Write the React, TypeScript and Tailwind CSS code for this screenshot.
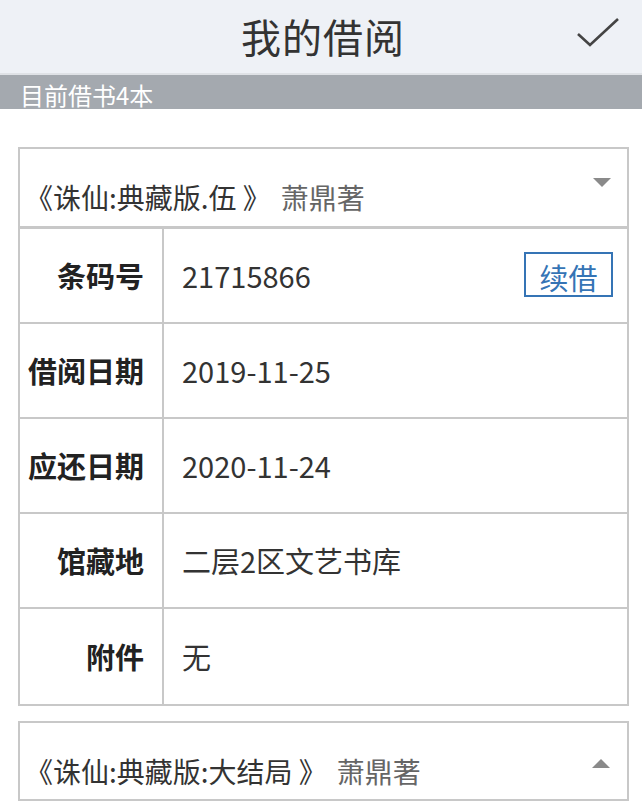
import React from "react";

const font = { fontFamily: '"Noto Sans CJK SC", "Noto Sans", sans-serif' };

const rows = [
  { label: "条码号", value: "21715866", renew: true },
  { label: "借阅日期", value: "2019-11-25" },
  { label: "应还日期", value: "2020-11-24" },
  { label: "馆藏地", value: "二层2区文艺书库" },
  { label: "附件", value: "无" },
];

function Triangle({ up }: { up?: boolean }) {
  return (
    <svg width="18" height="9" viewBox="0 0 18 9" className="text-[#8a8a8a]">
      <path d={up ? "M9 0 L18 9 L0 9 Z" : "M0 0 L18 0 L9 9 Z"} fill="currentColor" />
    </svg>
  );
}

export default function App() {
  return (
    <div className="w-[642px] h-[808px] bg-white overflow-hidden" style={font}>
      {/* Header */}
      <header className="relative h-[75px] bg-[#eef1f6] flex items-center justify-center border-b-2 border-[#dfe2e6]">
        <h1 className="text-[40px] leading-none text-[#333] tracking-[1px] pb-[2px] pl-[4px]">我的借阅</h1>
        <svg
          className="absolute right-[22px] top-[17px]"
          width="44"
          height="30"
          viewBox="0 0 44 30"
          fill="none"
          stroke="#444"
          strokeWidth="2.6"
        >
          <path d="M2 17 L14 28 L42 2" />
        </svg>
      </header>

      <div className="h-[34px] bg-[#a4a9af] flex items-end pl-[20px] pb-[2px] text-[24px] text-white leading-none">
        目前借书4本
      </div>

      {/* Book 1 */}
      <div className="ml-[18px] mr-[13px] mt-[38px] border-2 border-[#c8c8c8]">
        <div className="h-[80px] flex items-end pb-[15px] pl-[5px] pr-[16px] border-b-[3px] border-[#c8c8c8]">
          <span className="text-[28px] leading-none text-[#333]">《诛仙:典藏版.伍 》</span>
          <span className="text-[28px] leading-none text-[#666] ml-[10px]">萧鼎著</span>
          <span className="ml-auto mb-[24px] flex">
            <Triangle />
          </span>
        </div>
        {rows.map((r, i) => (
          <div
            key={r.label}
            className={`flex h-[95px] ${i < rows.length - 1 ? "border-b-2 border-[#c8c8c8]" : ""}`}
          >
            <div className="w-[144px] shrink-0 border-r-2 border-[#c8c8c8] flex items-center justify-end pr-[18px] text-[29px] font-bold text-[#222]">
              {r.label}
            </div>
            <div className="flex-1 flex items-center pl-[18px] pr-[14px] text-[29px] text-[#333]">
              <span>{r.value}</span>
              {r.renew && (
                <div className="ml-auto mb-[2px] w-[89px] h-[45px] border-2 border-[#3574b5] overflow-hidden flex justify-center">
                  <span className="text-[29px] leading-none text-[#3574b5] pt-[9px]">续借</span>
                </div>
              )}
            </div>
          </div>
        ))}
      </div>

      {/* Book 2 */}
      <div className="ml-[18px] mr-[13px] mt-[15px] h-[80px] border-2 border-[#c8c8c8] flex items-end pb-[14px] pl-[5px] pr-[17px]">
        <span className="text-[28px] leading-none text-[#333]">《诛仙:典藏版:大结局 》</span>
        <span className="text-[28px] leading-none text-[#666] ml-[10px]">萧鼎著</span>
        <span className="ml-auto mb-[17px] flex">
          <Triangle up />
        </span>
      </div>
    </div>
  );
}
